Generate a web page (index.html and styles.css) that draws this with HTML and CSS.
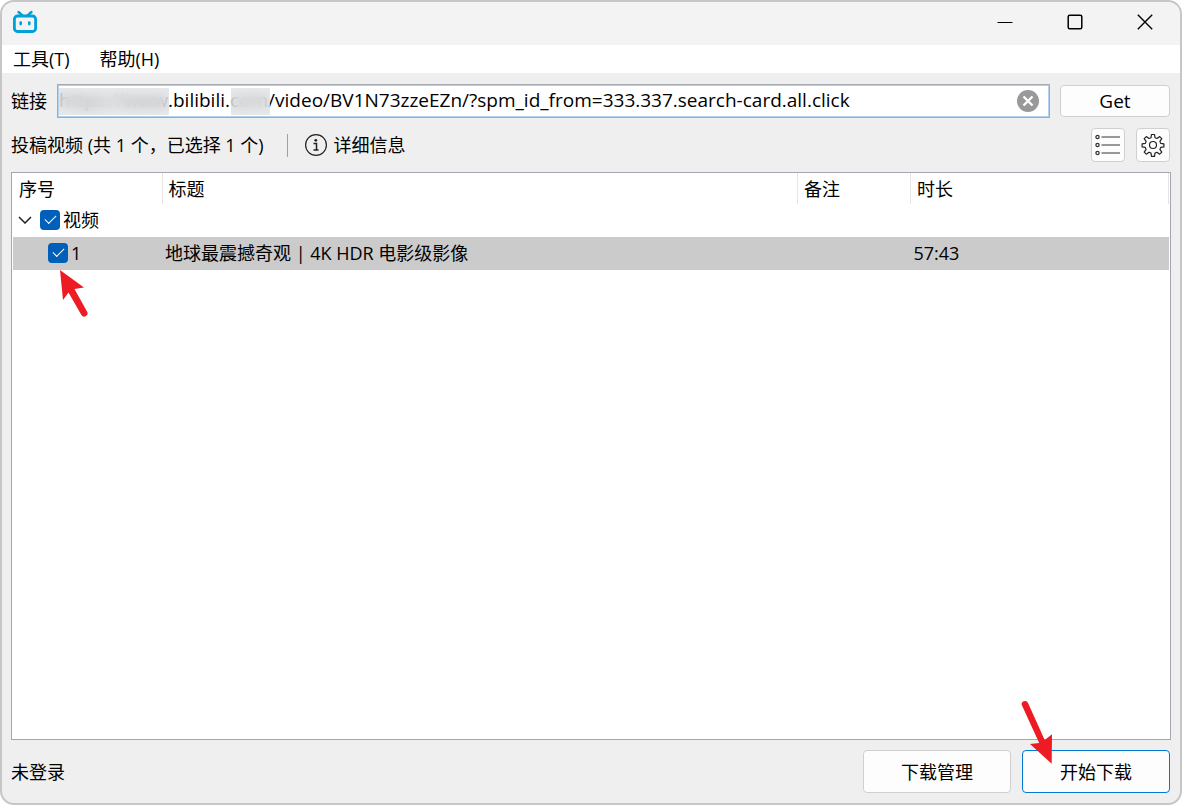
FILE: index.html
```html
<!DOCTYPE html>
<html lang="zh-CN">
<head>
    <meta charset="utf-8">
    <title>投稿视频</title>
    <link rel="stylesheet" href="styles.css">
</head>
<body>
<div class="window">
    <header class="titlebar">
        <svg class="logo" width="26" height="24" viewBox="0 0 26 24" fill="none" stroke="#00a1d6" stroke-linecap="round">
            <rect x="2.400" y="6" width="21.200" height="15.500" rx="3" stroke-width="2.800"/>
            <path d="M6.500 2l4 3.500M19.500 2l-4 3.500" stroke-width="2.400"/>
            <path d="M8.700 12.500v1.600M17.300 12.500v1.600" stroke-width="2.600"/>
        </svg>
        <div class="window-buttons">
            <button type="button" aria-label="最小化">
                <svg width="16" height="16" viewBox="0 0 16 16"><path d="M0.500 8.500h15" stroke="#000" stroke-width="1"/></svg>
            </button>
            <button type="button" aria-label="最大化">
                <svg width="16" height="16" viewBox="0 0 16 16"><rect x="1.200" y="1.200" width="13.600" height="13.600" rx="1.500" fill="none" stroke="#000" stroke-width="1.500"/></svg>
            </button>
            <button type="button" aria-label="关闭">
                <svg width="16" height="16" viewBox="0 0 16 16"><path d="M0.800 0.800l14.400 14.400M15.200 0.800L0.800 15.200" stroke="#000" stroke-width="1.400"/></svg>
            </button>
        </div>
    </header>
    <nav class="menubar">
        <button type="button">工具(T)</button>
        <button type="button">帮助(H)</button>
    </nav>
    <main>
        <form class="link-row">
            <label for="url">链接</label>
            <div class="url-box">
                <input id="url" type="text" spellcheck="false" value="https://www.bilibili.com/video/BV1N73zzeEZn/?spm_id_from=333.337.search-card.all.click">
                <span class="mask mask-host"></span>
                <span class="mask mask-tld"></span>
                <button class="clear" type="button" aria-label="清除">
                    <svg width="22" height="22" viewBox="0 0 22 22"><circle cx="11" cy="11" r="11" fill="#999"/><path d="M6.500 6.500l9 9M15.500 6.500l-9 9" stroke="#fff" stroke-width="2.400"/></svg>
                </button>
            </div>
            <button class="btn btn-get" type="button">Get</button>
        </form>
        <div class="info-row">
            <span>投稿视频 (共 1 个，已选择 1 个)</span>
            <span class="separator"></span>
            <button class="detail" type="button">
                <svg width="22" height="22" viewBox="0 0 22 22"><circle cx="11" cy="11" r="10.400" fill="none" stroke="#222" stroke-width="1.200"/><circle cx="10.800" cy="6.300" r="1.400" fill="#222"/><path d="M8.500 9.500h3v6.500M8.500 16h5" fill="none" stroke="#222" stroke-width="1.500"/></svg>
                详细信息
            </button>
            <div class="tools">
                <button class="btn btn-icon" type="button" aria-label="列表">
                    <svg width="26" height="24" viewBox="0 0 26 24" fill="none">
                        <g stroke="#333" stroke-width="1.300"><circle cx="2.500" cy="4" r="1.600"/><circle cx="2.500" cy="12" r="1.600"/><circle cx="2.500" cy="20" r="1.600"/></g>
                        <path d="M6.500 4H25M6.500 12H25M6.500 20H25" stroke="#777" stroke-width="1.400"/>
                    </svg>
                </button>
                <button class="btn btn-icon" type="button" aria-label="设置">
                    <svg width="24" height="24" viewBox="0 0 24 24" fill="none" stroke="#222" stroke-width="1.200" stroke-linejoin="round">
                        <path d="M10.500 1.500h3l.5 3.200 2 .8 2.700-1.900 2.100 2.100-1.900 2.700.8 2 3.200.5v3l-3.200.5-.8 2 1.900 2.700-2.100 2.100-2.700-1.900-2 .8-.5 3.200h-3l-.5-3.200-2-.8-2.700 1.900-2.100-2.100 1.900-2.700-.8-2-3.200-.5v-3l3.200-.5.8-2-1.900-2.700 2.100-2.100 2.700 1.900 2-.8z"/>
                        <circle cx="12" cy="12" r="3.500"/>
                    </svg>
                </button>
            </div>
        </div>
        <div class="list">
            <table>
                <colgroup>
                    <col class="col-no">
                    <col>
                    <col class="col-note">
                    <col class="col-time">
                </colgroup>
                <thead>
                    <tr><th>序号</th><th>标题</th><th>备注</th><th>时长</th></tr>
                </thead>
                <tbody>
                    <tr>
                        <td colspan="4">
                            <div class="node">
                                <svg class="chevron" width="14" height="8" viewBox="0 0 14 8"><path d="M1 1l6 6 6-6" fill="none" stroke="#222" stroke-width="1.500"/></svg>
                                <input id="group" type="checkbox" checked>
                                <label for="group">视频</label>
                            </div>
                        </td>
                    </tr>
                    <tr class="selected">
                        <td>
                            <div class="node child">
                                <input id="item1" type="checkbox" checked>
                                <label for="item1">1</label>
                                <svg class="arrow arrow-item" width="30" height="50" viewBox="0 0 30 50" fill="#ed1c24"><path d="M1 1L25 18.500 15.500 20 28 42.500A3.200 3.200 0 0 1 22.400 46L9.500 23.500 4 31z"/></svg>
                            </div>
                        </td>
                        <td>地球最震撼奇观 | 4K HDR 电影级影像</td>
                        <td></td>
                        <td>57:43</td>
                    </tr>
                </tbody>
            </table>
        </div>
    </main>
    <footer>
        <span class="status">未登录</span>
        <button class="btn btn-action" type="button">下载管理</button>
        <button class="btn btn-action primary" type="button">
            开始下载
            <svg class="arrow arrow-start" width="36" height="66" viewBox="0 0 36 66" fill="#ed1c24"><path d="M31.700 64.700L10 45 19.200 44 2 6.600A3.200 3.200 0 0 1 8 4L24.700 41 32 35.300z"/></svg>
        </button>
    </footer>
</div>
</body>
</html>
```
FILE: styles.css
```css
* {
    box-sizing: border-box;
}
body {
    margin: 0;
    background: #fff;
    color: #000;
    font-family: "Open Sans", "Noto Sans CJK SC", sans-serif;
    font-size: 18px;
    line-height: 24px;
}
button, input {
    font: inherit;
    color: inherit;
}
button {
    padding: 0;
    border: 0;
    background: none;
}
svg {
    display: block;
    flex: none;
}
.window {
    display: flex;
    flex-direction: column;
    min-height: 100vh;
    border: 2px solid #c6c6c6;
    border-radius: 14px;
    background: #efefef;
    overflow: hidden;
}

/* title bar and menu */
.titlebar {
    display: flex;
    align-items: center;
    justify-content: space-between;
    height: 43px;
    padding: 0 0 3px 10px;
    background: #f3f3f3;
}
.window-buttons {
    display: flex;
}
.window-buttons button {
    display: flex;
    align-items: center;
    justify-content: center;
    width: 70px;
    height: 40px;
}
.menubar {
    display: flex;
    gap: 30px;
    height: 28px;
    padding: 0 11px;
    background: #fff;
}

main {
    display: flex;
    flex: 1;
    flex-direction: column;
    gap: 10px;
    padding: 11px 10px 10px 9px;
}
.link-row {
    display: flex;
    align-items: center;
    gap: 10px;
}
.url-box {
    position: relative;
    flex: 1;
    height: 34px;
}
.url-box input {
    width: 100%;
    height: 34px;
    padding: 0 40px 2px 1px;
    border: 1px solid #a5a9b2;
    outline: 1px solid #b1d1f0;
    outline-offset: -2px;
    background: #fff;
    font-size: 19px;
}
.mask {
    position: absolute;
    top: 4px;
    height: 27px;
    background: rgba(222, 224, 226, 0.7);
    backdrop-filter: blur(6px);
}
.mask-host {
    left: 2px;
    width: 110px;
}
.mask-tld {
    left: 174px;
    width: 39px;
}
.clear {
    position: absolute;
    top: 6px;
    right: 11px;
}
.btn {
    border: 1px solid #d0d0d0;
    border-radius: 4px;
    background: #fdfdfd;
}
.btn-get {
    width: 110px;
    height: 32px;
    font-size: 19px;
}

.info-row {
    display: flex;
    align-items: center;
    height: 34px;
}
.separator {
    width: 1px;
    height: 23px;
    margin: 0 17px 0 23px;
    background: #a0a0a0;
}
.detail {
    display: flex;
    align-items: center;
    gap: 7px;
}
.tools {
    display: flex;
    gap: 11px;
    margin-left: auto;
}
.btn-icon {
    display: flex;
    align-items: center;
    justify-content: center;
    width: 34px;
    height: 34px;
}

/* video list */
.list {
    flex: 1;
    margin-right: -1px;
    padding: 0 1px;
    border: 1px solid #a5a7ae;
    background: #fff;
}
table {
    width: 100%;
    border-collapse: collapse;
    table-layout: fixed;
}
.col-no {
    width: 149px;
}
.col-note {
    width: 113px;
}
.col-time {
    width: 258px;
}
th {
    height: 31px;
    padding: 0 6px;
    border-right: 1px solid #e5e5e5;
    font-weight: normal;
    text-align: left;
}
td {
    height: 33px;
    padding: 0 3px 2px;
    white-space: nowrap;
}
.node {
    position: relative;
    display: flex;
    align-items: center;
    gap: 3px;
    padding-left: 2px;
}
.chevron {
    margin-right: 5px;
}
.child {
    padding-left: 32px;
}
.selected {
    background: #cbcbcb;
}
input[type="checkbox"] {
    appearance: none;
    display: grid;
    place-items: center;
    width: 20px;
    height: 20px;
    margin: 0;
    border-radius: 4px;
    background: #005fb8;
}
input[type="checkbox"]::before {
    content: "";
    width: 10px;
    height: 5px;
    margin-bottom: 3px;
    border: solid #fff;
    border-width: 0 0 1px 1px;
    transform: rotate(-45deg);
}
.arrow {
    position: absolute;
    pointer-events: none;
}
.arrow-item {
    top: 28px;
    left: 43px;
}

footer {
    display: flex;
    align-items: center;
    gap: 11px;
    padding: 0 10px 10px 9px;
}
.status {
    margin-right: auto;
}
.btn-action {
    position: relative;
    width: 148px;
    height: 43px;
}
.primary {
    border-color: #0078d4;
}
.arrow-start {
    top: -52px;
    left: -3px;
}
```
